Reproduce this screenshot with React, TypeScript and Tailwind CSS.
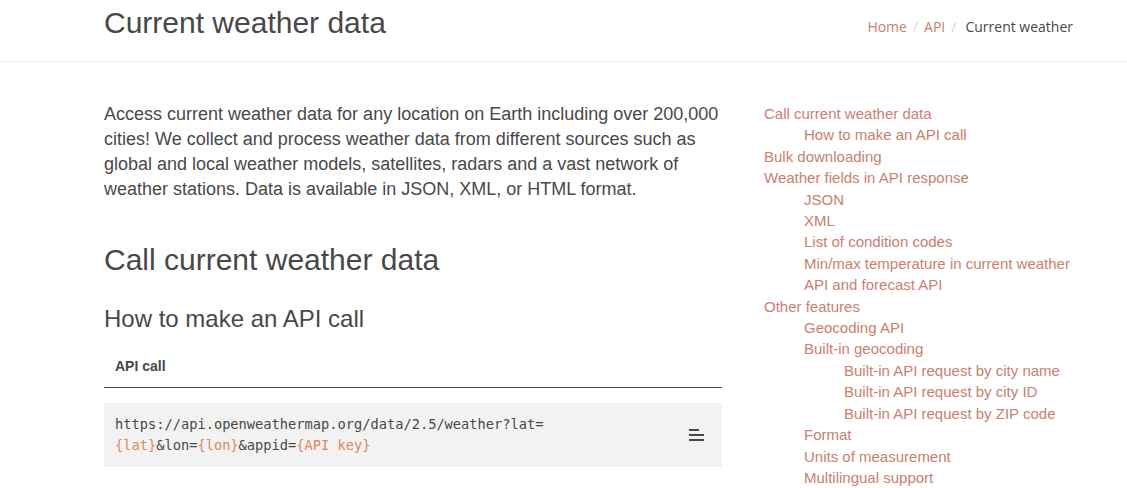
const SANS = "font-['Liberation_Sans',Arial,sans-serif]"

const TOC: [string, number][] = [
  ['Call current weather data', 0],
  ['How to make an API call', 1],
  ['Bulk downloading', 0],
  ['Weather fields in API response', 0],
  ['JSON', 1],
  ['XML', 1],
  ['List of condition codes', 1],
  ['Min/max temperature in current weather', 1],
  ['API and forecast API', 1],
  ['Other features', 0],
  ['Geocoding API', 1],
  ['Built-in geocoding', 1],
  ['Built-in API request by city name', 2],
  ['Built-in API request by city ID', 2],
  ['Built-in API request by ZIP code', 2],
  ['Format', 1],
  ['Units of measurement', 1],
  ['Multilingual support', 1],
]

const indent = ['pl-0', 'pl-[40px]', 'pl-[80px]']

export default function App() {
  return (
    <div className={`min-h-screen bg-white text-[#48484a] ${SANS}`}>
      {/* page header */}
      <header className="border-b border-[#ececec] h-[62px]">
        <div className="pl-[104px] pr-[54px] flex justify-between items-start">
          <h1 className="text-[30px] leading-[34px] pt-[6px] text-[#48484a]">Current weather data</h1>
          <nav className="pt-[16px] text-[14px] font-['Open_Sans',sans-serif] flex items-center">
            <a className="text-[#c9806e]">Home</a>
            <span className="text-[#d7d7d7] px-[6px]">/</span>
            <a className="text-[#c9806e]">API</a>
            <span className="text-[#d7d7d7] px-[6px]">/</span>
            <span className="pl-[3px] text-[#48484a]">Current weather</span>
          </nav>
        </div>
      </header>

      <div className="pl-[104px] flex gap-[42px]">
        {/* main column */}
        <main className="w-[618px] shrink-0">
          <p className="mt-[40px] text-[18px] leading-[25px]">
            Access current weather data for any location on Earth including over 200,000 cities! We collect and
            process weather data from different sources such as global and local weather models, satellites, radars
            and a vast network of weather stations. Data is available in JSON, XML, or HTML format.
          </p>
          <h2 className="mt-[38px] text-[30px] leading-[40px]">Call current weather data</h2>
          <h3 className="mt-[22px] text-[24px] leading-[34px]">How to make an API call</h3>
          <div className="mt-[9px] border-b border-[#48484a] px-[11px] pt-[11px] pb-[11px] text-[14px] font-bold leading-[20px]">
            API call
          </div>
          <div className="mt-[15px] bg-[#f2f2f3] px-[11px] py-[11px] flex items-center">
            <pre className="flex-1 font-['DejaVu_Sans_Mono',monospace] text-[13.7px] leading-[21px] whitespace-pre-wrap text-[#48484a]">
              https://api.openweathermap.org/data/2.5/weather?lat={'\n'}
              <span className="text-[#e0875c]">{'{lat}'}</span>&amp;lon=
              <span className="text-[#e0875c]">{'{lon}'}</span>&amp;appid=
              <span className="text-[#e0875c]">{'{API key}'}</span>
            </pre>
            <svg width="16" height="14" viewBox="0 0 16 14" className="mr-[6px] shrink-0">
              <rect x="0" y="1" width="10" height="2" fill="#48484a" />
              <rect x="0" y="6" width="15" height="2" fill="#48484a" />
              <rect x="0" y="11" width="15" height="2" fill="#48484a" />
            </svg>
          </div>
        </main>

        {/* table of contents */}
        <aside className="pt-[41px] text-[15px] leading-[21.4px]">
          {TOC.map(([label, lvl]) => (
            <div key={label} className={`${indent[lvl]} text-[#c9806e] whitespace-nowrap`}>
              {label}
            </div>
          ))}
        </aside>
      </div>
    </div>
  )
}
